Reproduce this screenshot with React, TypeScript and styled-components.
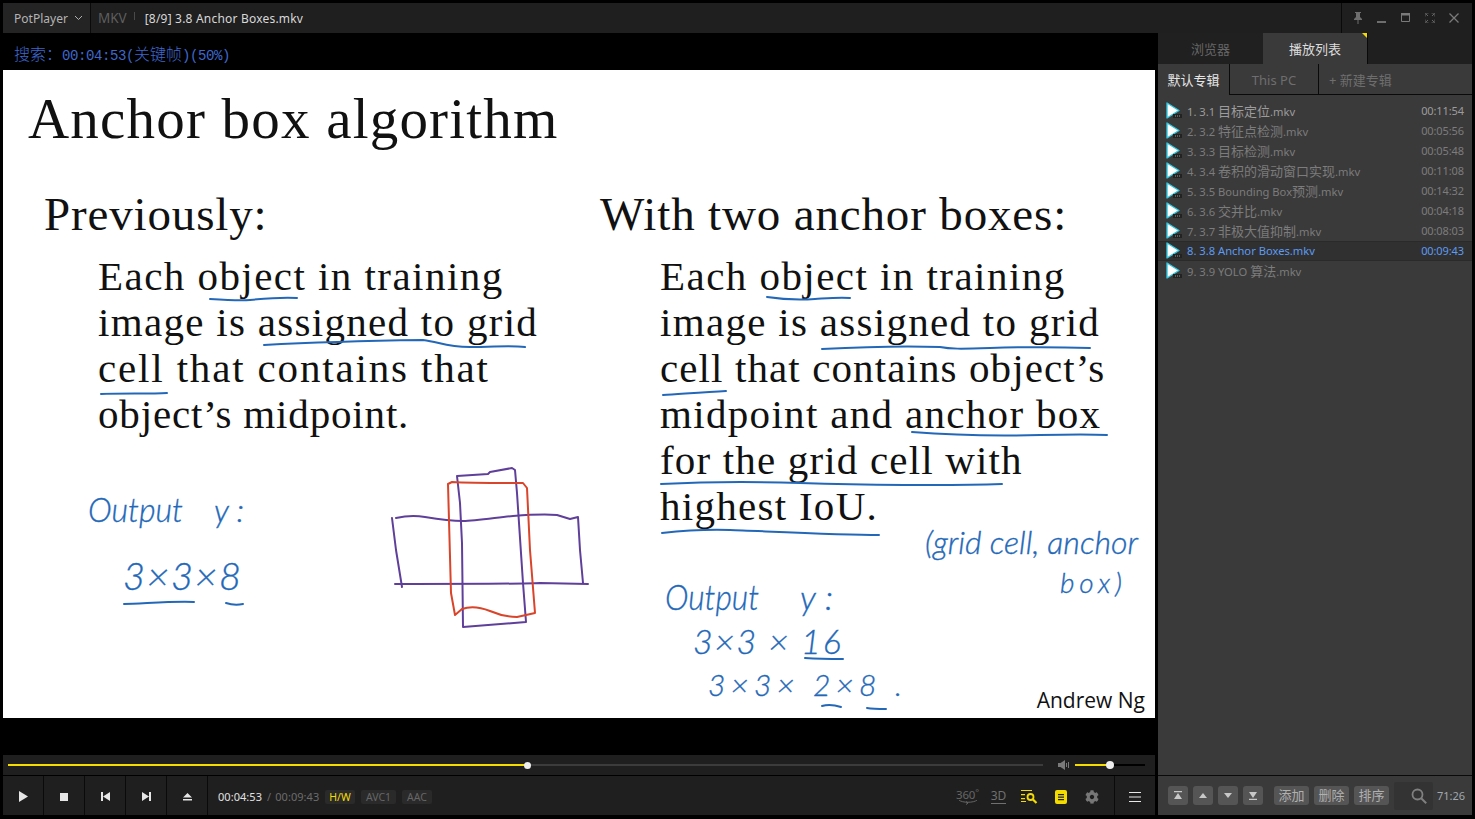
import React from 'react';
import styled, { createGlobalStyle } from 'styled-components';
import { FaCog } from 'react-icons/fa';

const Global = createGlobalStyle`
  html, body { margin: 0; padding: 0; background: #000; }
  * { box-sizing: border-box; }
`;

const UI = `"Noto Sans", "Noto Sans CJK SC", sans-serif`;

const Frame = styled.div`
  width: 1475px; height: 819px; background: #000; padding: 3px 3px 4px 3px;
  display: flex; flex-direction: column; overflow: hidden; font-family: ${UI};
`;
const TitleBar = styled.header`
  height: 30px; flex: none; display: flex; align-items: stretch; background: #1f1f1f;
`;
const AppMenu = styled.div`
  width: 88px; background: #242424; border-right: 1px solid #0a0a0a; display: flex; align-items: center;
  padding-left: 11px; gap: 6px; color: #b4b4b4; font-size: 12px; letter-spacing: 0.03px;
`;
const FileInfo = styled.div`
  flex: 1; display: flex; align-items: center; padding-left: 7px; font-size: 12px; letter-spacing: 0.2px; color: #d8d8d8;
`;
const Format = styled.span`
  font-size: 13.5px; color: #5e5e5e; padding-right: 8px; position: relative; margin-right: 10px; letter-spacing: 0;
  &::after { content: ''; position: absolute; right: 0; top: 3px; height: 8px; width: 1px; background: #4a4a4a; }
`;
const WindowControls = styled.div`
  width: 131px; border-left: 1px solid #0a0a0a; display: flex; align-items: center; padding-left: 4px;
`;
const WinButton = styled.div`
  width: 24px; display: flex; justify-content: center; align-items: center;
`;
const Body = styled.div`
  flex: 1; display: flex; gap: 3px; min-height: 0;
`;
const Stage = styled.main`
  width: 1152px; flex: none; display: flex; flex-direction: column;
`;
const Osd = styled.div`
  height: 37px; flex: none; padding: 10px 0 0 11px; color: #3f68cc; font-size: 16px; line-height: 20px; font-family: "Noto Sans CJK SC", serif; font-weight: 300; white-space: nowrap;
`;
const OsdLatin = styled.span`
  font-family: "Liberation Mono", monospace; font-size: 14px; letter-spacing: -0.4px; font-weight: 400;
`;
const Slide = styled.section`
  position: relative; height: 648px; flex: none; background: #fff; color: #111; font-family: "Liberation Serif", serif; overflow: hidden;
`;
const SlideTitle = styled.h1`
  margin: 0; padding: 14px 0 0 25px; font-size: 57px; line-height: 70px; font-weight: 400; letter-spacing: 1.2px; white-space: nowrap;
`;
const Columns = styled.div`
  display: grid; grid-template-columns: 556px 1fr; padding: 30px 0 0 41px;
`;
const Heading = styled.h2`
  margin: 0 0 9px; font-size: 47px; line-height: 60px; font-weight: 400; white-space: nowrap; letter-spacing: 0.85px;
`;
const Lines = styled.div<{ $indent: number }>`
  margin-left: ${p => p.$indent}px; font-size: 41px; line-height: 46px; white-space: nowrap;
`;
const Line = styled.div<{ $track: number }>`
  letter-spacing: ${p => p.$track}px;
`;
const Credit = styled.span`
  position: absolute; right: 10px; bottom: 3px; font-family: "Open Sans", sans-serif; font-size: 21px; line-height: 30px; color: #111;
`;
const Ink = styled.svg`
  position: absolute; left: 0; top: 0; width: 1152px; height: 648px; pointer-events: none;
`;
const InkText = styled.text`
  font-family: "Lato", "Open Sans", sans-serif; font-style: italic; font-weight: 300; fill: #2368b8; stroke: #2368b8; stroke-width: 0.35px;
`;
const Gap = styled.div`
  flex: 1;
`;
const SeekRow = styled.div`
  height: 20px; flex: none; background: #1f1f1f; display: flex; align-items: center; padding: 0 10px 0 5px;
`;
const Track = styled.div<{ $bg: string; $fill: string; $pct: number; $knob: number }>`
  position: relative; height: 2px; background: linear-gradient(to right, ${p => p.$fill} ${p => p.$pct}%, ${p => p.$bg} ${p => p.$pct}%);
  &::after {
    content: ''; position: absolute; left: ${p => p.$pct}%; top: 50%; width: ${p => p.$knob}px; height: ${p => p.$knob}px;
    margin: -${p => p.$knob / 2}px 0 0 -${p => p.$knob / 2}px; border-radius: 50%; background: #eee;
  }
`;
const SeekTrack = styled(Track)`
  flex: 1;
`;
const VolumeTrack = styled(Track)`
  width: 70px; flex: none;
`;
const VolumeIcon = styled.div`
  width: 12px; height: 12px; margin: 0 5px 0 15px; flex: none; display: flex;
`;
const ControlBar = styled.div`
  height: 39px; margin-top: 1px; flex: none; background: #1f1f1f; display: flex; align-items: stretch;
`;
const Transport = styled.div`
  width: 41px; flex: none; padding-top: 2px; border-right: 1px solid #0a0a0a; display: flex; align-items: center; justify-content: center;
`;
const Time = styled.div`
  margin-left: 10px; padding-top: 2px; display: flex; align-items: center; font-size: 11px; letter-spacing: 0.05px; color: #e2e2e2; width: 107px; white-space: nowrap;
`;
const TimeSep = styled.span`
  color: #6a6a6a; margin: 0 4px 0 5px;
`;
const TimeTotal = styled.span`
  color: #6c6c6c;
`;
const Badges = styled.div`
  display: flex; align-items: center; gap: 6px; padding-top: 2px;
`;
const Badge = styled.span<{ $w: number; $on?: boolean }>`
  width: ${p => p.$w}px; height: 14px; background: #2a2a2a; border-radius: 2px; font-size: 10.5px; line-height: 14px; text-align: center;
  color: ${p => (p.$on ? '#f5dc00' : '#666')};
`;
const ToolIcons = styled.div`
  margin-left: auto; display: flex; align-items: center; padding: 2px 7px 0 0; border-right: 1px solid #0a0a0a;
`;
const ToolIcon = styled.div`
  width: 31px; display: flex; flex-direction: column; justify-content: center; align-items: center;
`;
const Label360 = styled.span`
  font-size: 11.5px; line-height: 11px; color: #666; letter-spacing: -0.2px; white-space: nowrap;
  &::after { content: '°'; font-size: 9px; vertical-align: 3px; }
`;
const Arc360 = styled.svg`
  width: 20px; height: 6px; display: block;
`;
const Label3D = styled.span`
  font-size: 12px; line-height: 12px; padding-bottom: 1px; color: #707070; border-bottom: 1px solid #707070; white-space: nowrap;
`;
const Menu = styled.div`
  width: 40px; flex: none; padding-top: 2px; display: flex; align-items: center; justify-content: center;
`;
const Panel = styled.aside`
  width: 314px; flex: none; background: #3a3a3a; display: flex; flex-direction: column;
`;
const Tabs = styled.div`
  height: 31px; flex: none; display: flex; background: #1f1f1f;
`;
const Tab = styled.div<{ $active?: boolean }>`
  position: relative; width: 105px; font-size: 13px; padding-top: 1px; line-height: 30px; text-align: center;
  background: ${p => (p.$active ? '#3a3a3a' : '#202020')};
  color: ${p => (p.$active ? '#dcdcdc' : '#666')};
  border-right: ${p => (p.$active ? '1px solid #0a0a0a' : '0')};
  ${p => p.$active ? `&::after { content: ''; position: absolute; right: 0; top: 0; border-style: solid; border-width: 0 5px 5px 0; border-color: transparent #f5dc00 transparent transparent; }` : ''}
`;
const SubTabs = styled.div`
  height: 31px; flex: none; display: flex;
`;
const SubTab = styled.div<{ $w?: number; $active?: boolean }>`
  ${p => (p.$w ? `width: ${p.$w}px;` : 'flex: 1;')}
  font-size: 13px; padding-top: 1px; line-height: 30px; white-space: nowrap;
  text-align: ${p => (p.$w ? 'center' : 'left')};
  padding-left: ${p => (p.$w ? 0 : 10)}px;
  color: ${p => (p.$active ? '#e6e6e6' : '#6e6e6e')};
  border-right: ${p => (p.$w ? '1px solid #0a0a0a' : '0')};
  border-bottom: ${p => (p.$active ? '0' : '1px solid #0a0a0a')};
`;
const List = styled.ul`
  flex: 1; list-style: none; margin: 0; padding: 6px 0 0; min-height: 0;
`;
const Row = styled.li<{ $state: string }>`
  height: 20px; display: flex; align-items: center; padding: 0 8px; font-size: 11.2px;
  background: ${p => (p.$state === 'now' ? '#303030' : 'transparent')};
  box-shadow: ${p => (p.$state === 'now' ? 'inset 0 1px 0 #2a2a2a, inset 0 -1px 0 #2a2a2a' : 'none')};
  color: ${p => (p.$state === 'now' ? '#5c9bf2' : p.$state === 'first' ? '#9c9c9c' : '#7c7c7c')};
`;
const RowIcon = styled.svg`
  width: 16px; height: 18px; margin-right: 5px; flex: none;
`;
const RowName = styled.span`
  flex: 1; white-space: nowrap; padding-bottom: 2px;
`;
const RowCjk = styled.span`
  font-size: 13px;
`;
const RowTime = styled.span`
  font-size: 11px; letter-spacing: -0.1px; padding-bottom: 1px;
`;
const PanelFoot = styled.div`
  height: 40px; flex: none; border-top: 1px solid #0a0a0a; display: flex; align-items: center; padding-left: 10px;
`;
const MoveButtons = styled.div`
  display: flex; gap: 5px; margin-right: 11px;
`;
const MoveButton = styled.div`
  width: 20px; height: 19px; background: #555; border-radius: 3px; display: flex; align-items: center; justify-content: center;
`;
const TextButtons = styled.div`
  display: flex; gap: 5px; margin-right: 5px;
`;
const TextButton = styled.div`
  width: 35px; height: 19px; background: #555; border-radius: 3px; color: #b0b0b0; font-size: 13px; line-height: 19px; text-align: center; white-space: nowrap;
`;
const SearchBox = styled.div`
  width: 39px; height: 28px; background: #333; border-radius: 2px; display: flex; align-items: center; justify-content: flex-end; padding-right: 6px;
`;
const Clock = styled.div`
  margin-left: 4px; font-size: 11px; color: #a0a8b0;
`;

const Icon = {
  Chevron: () => <svg width="9" height="6" viewBox="0 0 9 6"><path d="M1 1l3.5 3.5L8 1" fill="none" stroke="#b0b0b0" strokeWidth="1" /></svg>,
  Pin: () => <svg width="10" height="12" viewBox="0 0 10 12"><path d="M2 0h6v1H7v4l2 2v1H1V7l2-2V1H2zM4.5 8h1v4h-1z" fill="#6e6e6e" /></svg>,
  Min: () => <svg width="10" height="12" viewBox="0 0 10 12"><rect x="0" y="9" width="9" height="2" fill="#6e6e6e" /></svg>,
  Max: () => <svg width="10" height="10" viewBox="0 0 10 10"><path d="M.5.5h8v8h-8z" fill="none" stroke="#7a7a7a" /><rect width="9" height="2.5" fill="#7a7a7a" /></svg>,
  Full: () => <svg width="10" height="10" viewBox="0 0 10 10"><path d="M0 3.5V0h3.5M6.5 0H10v3.5M10 6.5V10H6.5M3.5 10H0V6.5M1 1l2 2M9 1L7 3M9 9L7 7M1 9l2-2" fill="none" stroke="#666" /></svg>,
  Close: () => <svg width="10" height="10" viewBox="0 0 10 10"><path d="M.5.5l9 9M9.5.5l-9 9" stroke="#7a7a7a" strokeWidth="1.3" /></svg>,
  Play: () => <svg width="9" height="11" viewBox="0 0 9 11"><path d="M0 0l9 5.5L0 11z" fill="#e6e6e6" /></svg>,
  Stop: () => <svg width="8" height="8" viewBox="0 0 8 8"><rect width="8" height="8" fill="#e6e6e6" /></svg>,
  Prev: () => <svg width="9" height="9" viewBox="0 0 9 9"><path d="M0 0h2v9H0zM9 0v9L2 4.5z" fill="#e6e6e6" /></svg>,
  Next: () => <svg width="9" height="9" viewBox="0 0 9 9"><path d="M7 0h2v9H7zM0 0v9l7-4.5z" fill="#e6e6e6" /></svg>,
  Eject: () => <svg width="9" height="8" viewBox="0 0 9 8"><path d="M4.5 0L9 4.5H0zM0 6h9v1.5H0z" fill="#e6e6e6" /></svg>,
  Speaker: () => <svg width="12" height="12" viewBox="0 0 12 12"><path d="M0 4h2.5L7 1v10L2.5 8H0z" fill="#7a7a7a" /><path d="M8.5 4v4M10.5 3v6" stroke="#7a7a7a" /></svg>,
  Finder: () => (
    <svg width="17" height="15" viewBox="0 0 17 15">
      <path d="M0 1h11v1H0zM0 5h4v1.3H0zM0 9h4v1.3H0zM0 12h5v1H0z" fill="#f5dc00" />
      <circle cx="9.5" cy="8" r="3" fill="none" stroke="#f5dc00" strokeWidth="1.8" />
      <path d="M12 10.5l3.5 3.5" stroke="#f5dc00" strokeWidth="2.2" />
    </svg>
  ),
  Note: () => (
    <svg width="12" height="14" viewBox="0 0 12 14">
      <rect width="12" height="14" rx="2" fill="#f5dc00" />
      <path d="M3 4h6v1.2H3zM3 6.5h6v1.2H3zM3 9h6v1.2H3z" fill="#222" />
    </svg>
  ),
  Burger: () => <svg width="12" height="10" viewBox="0 0 12 10"><path d="M0 0h12v1H0zM0 4.5h12v1H0zM0 9h12v1H0z" fill="#e8e8e8" /></svg>,
  Top: () => <svg width="10" height="9" viewBox="0 0 10 9"><path d="M1 0h8v1.2H1zM5 2l4 6H1z" fill="#c8c8c8" /></svg>,
  Up: () => <svg width="8" height="5" viewBox="0 0 8 5"><path d="M4 0l4 5H0z" fill="#c8c8c8" /></svg>,
  Down: () => <svg width="8" height="5" viewBox="0 0 8 5"><path d="M4 5l4-5H0z" fill="#c8c8c8" /></svg>,
  Bottom: () => <svg width="10" height="9" viewBox="0 0 10 9"><path d="M1 7.8h8V9H1zM5 7l4-6H1z" fill="#c8c8c8" /></svg>,
  Search: () => <svg width="16" height="16" viewBox="0 0 16 16"><circle cx="6.5" cy="6.5" r="5" fill="none" stroke="#808080" strokeWidth="1.8" /><path d="M10.2 10.2l5 5" stroke="#808080" strokeWidth="2" /></svg>,
  File: () => (
    <RowIcon viewBox="0 0 16 18">
      <path d="M1 1l12 7.5L1 16z" fill="#fff" stroke="#2fc4dc" strokeWidth="1.4" strokeLinejoin="round" />
      <rect x="7" y="12" width="9" height="4" fill="#222" />
      <path d="M9 14h5" stroke="#999" strokeWidth="1" strokeDasharray="1 1" />
    </RowIcon>
  ),
};

const playlist = [
  ['1. 3.1 目标定位.mkv', '00:11:54'],
  ['2. 3.2 特征点检测.mkv', '00:05:56'],
  ['3. 3.3 目标检测.mkv', '00:05:48'],
  ['4. 3.4 卷积的滑动窗口实现.mkv', '00:11:08'],
  ['5. 3.5 Bounding Box预测.mkv', '00:14:32'],
  ['6. 3.6 交并比.mkv', '00:04:18'],
  ['7. 3.7 非极大值抑制.mkv', '00:08:03'],
  ['8. 3.8 Anchor Boxes.mkv', '00:09:43'],
  ['9. 3.9 YOLO 算法.mkv', ''],
];

const blue = [
  'M210 299C225 300 240 301 250 300S285 297 297 298',
  'M264 345C300 343 350 341 423 340C440 342 445 347 470 347S510 345 525 347',
  'M101 394C120 393 150 394 167 393',
  'M767 297C780 299 800 300 815 299S840 297 850 298',
  'M822 349C860 347 910 346 940 347C950 349 960 349 990 348S1060 347 1090 348',
  'M663 395C680 394 705 392 726 391',
  'M912 432C950 435 1000 436 1040 435S1090 434 1107 435',
  'M661 484C700 482 740 481 800 483S950 486 1002 484',
  'M662 533C680 531 700 529 730 530S840 535 879 535',
  'M124 604C140 604 170 601 194 602',
  'M226 603C232 605 238 605 243 604',
  'M805 658C820 659 830 659 843 659',
  'M822 706C828 704 835 705 841 707',
  'M867 708C873 709 880 709 886 709',
];
const purple = [
  'M396 518C405 516 413 515 425 517S450 521 463 521S500 517 513 516S545 514 557 515L570 519L578 517L580 550L583 583',
  'M392 518L396 550L402 587',
  'M395 584C430 584 520 584 540 583L588 584',
  'M457 476L460 503L462 543L463 627L526 622L523 583L517 493L515 470L512 468L490 472L488 474z',
];
const red = [
  'M448 484L452 482C470 483 490 483 523 483L527 488L530 550L535 613L517 617C505 617 497 614 490 611C480 607 470 606 462 609L455 615L451 593z',
];

const leftBody: [string, number][] = [
  ['Each object in training', 1.45],
  ['image is assigned to grid', 1.3],
  ['cell that contains that', 1.84],
  ['object’s midpoint.', 0.84],
];
const rightBody: [string, number][] = [
  ['Each object in training', 1.45],
  ['image is assigned to grid', 1.3],
  ['cell that contains object’s', 1.1],
  ['midpoint and anchor box', 1.32],
  ['for the grid cell with', 1.17],
  ['highest IoU.', 1.28],
];

const cjkRun = /([\u4e00-\u9fa5]+)/;

export default function App() {
  return (
    <Frame>
      <Global />
      <TitleBar>
        <AppMenu>PotPlayer <Icon.Chevron /></AppMenu>
        <FileInfo><Format>MKV</Format>[8/9] 3.8 Anchor Boxes.mkv</FileInfo>
        <WindowControls>
          <WinButton><Icon.Pin /></WinButton>
          <WinButton><Icon.Min /></WinButton>
          <WinButton><Icon.Max /></WinButton>
          <WinButton><Icon.Full /></WinButton>
          <WinButton><Icon.Close /></WinButton>
        </WindowControls>
      </TitleBar>
      <Body>
        <Stage>
          <Osd>搜索：<OsdLatin>00:04:53(</OsdLatin>关键帧<OsdLatin>)(50%)</OsdLatin></Osd>
          <Slide>
            <SlideTitle>Anchor box algorithm</SlideTitle>
            <Columns>
              <div>
                <Heading>Previously:</Heading>
                <Lines $indent={54}>{leftBody.map(([l, t]) => <Line key={l} $track={t}>{l}</Line>)}</Lines>
              </div>
              <div>
                <Heading>With two anchor boxes:</Heading>
                <Lines $indent={60}>{rightBody.map(([l, t]) => <Line key={l} $track={t}>{l}</Line>)}</Lines>
              </div>
            </Columns>
            <Credit>Andrew Ng</Credit>
            <Ink viewBox="3 70 1152 648">
              <g fill="none" strokeLinecap="round" strokeLinejoin="round">
                {blue.map(d => <path key={d} d={d} stroke="#2368b8" strokeWidth="2" />)}
                {purple.map(d => <path key={d} d={d} stroke="#5f3f99" strokeWidth="2" />)}
                {red.map(d => <path key={d} d={d} stroke="#d8452a" strokeWidth="2" />)}
              </g>
              <InkText x="88" y="522" fontSize="34" textLength="95" lengthAdjust="spacingAndGlyphs">Output</InkText>
              <InkText x="214" y="522" fontSize="32" textLength="30">y:</InkText>
              <InkText x="123" y="590" fontSize="38" textLength="118" lengthAdjust="spacing">3×3×8</InkText>
              <InkText x="925" y="554" fontSize="32" textLength="213" lengthAdjust="spacingAndGlyphs">(grid cell, anchor</InkText>
              <InkText x="1060" y="593" fontSize="28" textLength="62" lengthAdjust="spacing">box)</InkText>
              <InkText x="665" y="610" fontSize="36" textLength="94" lengthAdjust="spacingAndGlyphs">Output</InkText>
              <InkText x="800" y="610" fontSize="34" textLength="33">y:</InkText>
              <InkText x="693" y="654" fontSize="34" textLength="148" lengthAdjust="spacing">3×3 × 16</InkText>
              <InkText x="708" y="696" fontSize="30" textLength="194" lengthAdjust="spacing">3×3× 2×8 .</InkText>
            </Ink>
          </Slide>
          <Gap />
          <SeekRow>
            <SeekTrack $bg="#3c3c3c" $fill="#f5dc00" $pct={50.2} $knob={7} />
            <VolumeIcon><Icon.Speaker /></VolumeIcon>
            <VolumeTrack $bg="#000" $fill="#f5dc00" $pct={50} $knob={8} />
          </SeekRow>
          <ControlBar>
            <Transport><Icon.Play /></Transport>
            <Transport><Icon.Stop /></Transport>
            <Transport><Icon.Prev /></Transport>
            <Transport><Icon.Next /></Transport>
            <Transport><Icon.Eject /></Transport>
            <Time>00:04:53<TimeSep>/</TimeSep><TimeTotal>00:09:43</TimeTotal></Time>
            <Badges>
              <Badge $w={30} $on>H/W</Badge>
              <Badge $w={35}>AVC1</Badge>
              <Badge $w={30}>AAC</Badge>
            </Badges>
            <ToolIcons>
              <ToolIcon>
                <Label360>360</Label360>
                <Arc360 viewBox="0 0 20 6"><path d="M1 0c3 3 15 3 18 0M8 1.5l2 1.5L8 4.5" fill="none" stroke="#666" /></Arc360>
              </ToolIcon>
              <ToolIcon><Label3D>3D</Label3D></ToolIcon>
              <ToolIcon><Icon.Finder /></ToolIcon>
              <ToolIcon><Icon.Note /></ToolIcon>
              <ToolIcon><FaCog size={14} color="#777" /></ToolIcon>
            </ToolIcons>
            <Menu><Icon.Burger /></Menu>
          </ControlBar>
        </Stage>
        <Panel>
          <Tabs>
            <Tab>浏览器</Tab>
            <Tab $active>播放列表</Tab>
          </Tabs>
          <SubTabs>
            <SubTab $w={72} $active>默认专辑</SubTab>
            <SubTab $w={89}>This PC</SubTab>
            <SubTab>+ 新建专辑</SubTab>
          </SubTabs>
          <List>
            {playlist.map(([name, time], i) => (
              <Row key={name} $state={i === 7 ? 'now' : i === 0 ? 'first' : 'idle'}>
                <Icon.File />
                <RowName>
                  {name.split(cjkRun).map((part, j) =>
                    j % 2 ? <RowCjk key={j}>{part}</RowCjk> : part
                  )}
                </RowName>
                {time && <RowTime>{time}</RowTime>}
              </Row>
            ))}
          </List>
          <PanelFoot>
            <MoveButtons>
              <MoveButton><Icon.Top /></MoveButton>
              <MoveButton><Icon.Up /></MoveButton>
              <MoveButton><Icon.Down /></MoveButton>
              <MoveButton><Icon.Bottom /></MoveButton>
            </MoveButtons>
            <TextButtons>
              <TextButton>添加</TextButton>
              <TextButton>删除</TextButton>
              <TextButton>排序</TextButton>
            </TextButtons>
            <SearchBox><Icon.Search /></SearchBox>
            <Clock>71:26</Clock>
          </PanelFoot>
        </Panel>
      </Body>
    </Frame>
  );
}
